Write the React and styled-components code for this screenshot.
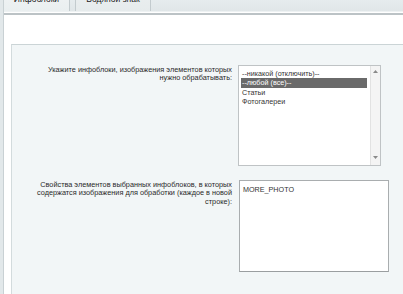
import React from "react";
import styled, { createGlobalStyle } from "styled-components";

const Global = createGlobalStyle`
  html, body { margin: 0; padding: 0; background: #ffffff; }
  body { font-family: "Liberation Sans", Arial, sans-serif; overflow: hidden; }
  #root { width: 403px; height: 294px; overflow: hidden; }
`;

const Page = styled.div`
  display: flex;
  width: 403px;
  height: 294px;
  overflow: hidden;
`;

const SideStrip = styled.div`
  width: 3px;
  flex: none;
  background: #e2e8ea;
  border-right: 1px solid #c9d1d4;
`;

const Main = styled.div`
  flex: 1;
  display: flex;
  flex-direction: column;
  min-width: 0;
`;

const TabBar = styled.div`
  height: 11px;
  display: flex;
  align-items: flex-end;
  gap: 5px;
  background: linear-gradient(#e6ecee, #e0e6e8);
  border-bottom: 1px solid #eef2f3;
  overflow: hidden;
`;

const Tab = styled.div`
  width: ${(p) => p.$w}px;
  height: 24px;
  flex: none;
  display: flex;
  align-items: flex-end;
  justify-content: center;
  padding-bottom: 7px;
  box-sizing: border-box;
  font-size: 8.5px;
  color: #222;
  background: ${(p) => (p.$active ? "linear-gradient(#f1f4f5, #eaeff0)" : "linear-gradient(#ecf0f1, #e6ebec)")};
  border-right: 1px solid #c3cbce;
  border-left: ${(p) => (p.$active ? "none" : "1px solid #c3cbce")};
`;

const TabRule = styled.div`
  height: 2px;
  margin-top: 1px;
  background: #bcc3c6;
`;

const Spacer = styled.div`
  height: 29px;
  background: #fff;
`;

const Panel = styled.div`
  flex: 1;
  margin-left: 7px;
  background: #f2f6f7;
  border-top: 1px solid #cbd4d6;
  border-left: 1px solid #d3dbdd;
  padding-top: 20px;
  display: grid;
  grid-template-columns: 220px 1fr;
  column-gap: 6px;
  row-gap: 14px;
  align-content: start;
`;

const Label = styled.div`
  text-align: right;
  font-size: 7.3px;
  line-height: 8.4px;
  color: #2a2a2a;
  white-space: nowrap;
  padding-top: ${(p) => p.$pt || 0}px;
`;

const ListBox = styled.div`
  width: 143px;
  height: 101px;
  box-sizing: border-box;
  background: #fff;
  border: 1px solid #bfc3c5;
  display: flex;
  padding: 2px 0 0 2px;
`;

const Options = styled.div`
  flex: 1;
  display: flex;
  flex-direction: column;
  padding-top: 1px;
`;

const Option = styled.div`
  height: 9.4px;
  line-height: 9.4px;
  font-size: 7.2px;
  padding-left: 1px;
  white-space: nowrap;
  color: ${(p) => (p.$selected ? "#fff" : "#333")};
  background: ${(p) => (p.$selected ? "#6a6a6a" : "transparent")};
  margin-right: 3px;
`;

const ScrollBar = styled.div`
  width: 10px;
  flex: none;
  margin-top: -2px;
  display: flex;
  flex-direction: column;
  justify-content: space-between;
  align-items: center;
  background: #f4f4f4;
  border-left: 1px solid #e2e2e2;
  padding: 4px 0 6px;
  box-sizing: border-box;
`;

const TextArea = styled.div`
  width: 150px;
  height: 92px;
  box-sizing: border-box;
  background: #fff;
  border: 1px solid #a9adaf;
  border-bottom-color: #9a9ea0;
  padding: 4px 3px;
  font-size: 7.2px;
  line-height: 9px;
  color: #333;
  margin-left: 1px;
`;

const Arrow = ({ up }) => (
  <svg width="5" height="3" viewBox="0 0 5 3">
    <path d={up ? "M0 3 L2.5 0 L5 3 Z" : "M0 0 L2.5 3 L5 0 Z"} fill="#8a8a8a" />
  </svg>
);

export default function App() {
  return (
    <>
      <Global />
      <Page>
        <SideStrip />
        <Main>
          <TabBar>
            <Tab $w={66} $active>Инфоблоки</Tab>
            <Tab $w={76}>Водяной знак</Tab>
          </TabBar>
          <TabRule />
          <Spacer />
          <Panel>
            <Label $pt={1}>
              Укажите инфоблоки, изображения элементов которых
              <br />
              нужно обрабатывать:
            </Label>
            <ListBox>
              <Options>
                <Option>--никакой (отключить)--</Option>
                <Option $selected>--любой (все)--</Option>
                <Option>Статьи</Option>
                <Option>Фотогалереи</Option>
              </Options>
              <ScrollBar>
                <Arrow up />
                <Arrow />
              </ScrollBar>
            </ListBox>
            <Label $pt={1}>
              Свойства элементов выбранных инфоблоков, в которых
              <br />
              содержатся изображения для обработки (каждое в новой
              <br />
              строке):
            </Label>
            <TextArea>MORE_PHOTO</TextArea>
          </Panel>
        </Main>
      </Page>
    </>
  );
}
